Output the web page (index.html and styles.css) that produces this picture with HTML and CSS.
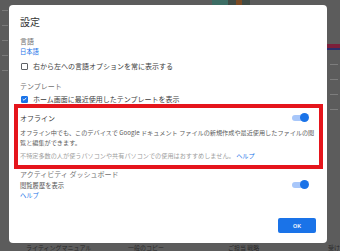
FILE: index.html
```html
<!DOCTYPE html>
<html lang="ja">
<head>
<meta charset="utf-8">
<link rel="stylesheet" href="styles.css">
</head>
<body>
<div class="page">
  <div class="page-top">
    <div class="thumb"><span class="t1"></span><span class="t2"></span></div>
  </div>
  <div class="page-side-left">
    <span class="dash"></span><span class="dash"></span><span class="dash"></span><span class="dash"></span><span class="dash"></span>
  </div>
  <div class="page-side-right">
    <span class="stripe"></span>
    <span class="tiny"></span><span class="tiny"></span><span class="tiny"></span><span class="tiny"></span>
  </div>
  <div class="page-bottom">
    <span class="bt b1">ライティングマニュアル</span>
    <span class="bt b2">一般のコピー</span>
    <span class="bt b3">ご担当 戦略</span>
    <span class="bt b4">受け</span>
  </div>
</div>

<div class="dialog">
  <h1 class="title">設定</h1>

  <div class="label mt-title">言語</div>
  <a class="link lang">日本語</a>
  <div class="check-row mt-row1">
    <span class="box"></span>
    <span class="check-text">右から左への言語オプションを常に表示する</span>
  </div>

  <div class="label mt-sec">テンプレート</div>
  <div class="check-row mt-row2">
    <span class="box checked"><svg viewBox="0 0 10 10" width="6" height="6"><path d="M1.5 5.2 L4 7.6 L8.6 2.6" fill="none" stroke="#fff" stroke-width="1.8"/></svg></span>
    <span class="check-text">ホーム画面に最近使用したテンプレートを表示</span>
  </div>

  <div class="offline">
    <div class="toggle-row">
      <span class="sec-dark">オフライン</span>
      <span class="toggle"><span class="knob"></span></span>
    </div>
    <p class="desc">オフライン中でも、このデバイスで Google ドキュメント ファイルの新規作成や最近使用したファイルの閲覧と編集ができます。</p>
    <p class="note">不特定多数の人が使うパソコンや共有パソコンでの使用はおすすめしません。 <a class="link">ヘルプ</a></p>
  </div>

  <div class="label mt-act">アクティビティ ダッシュボード</div>
  <div class="toggle-row small-row">
    <span class="small-text">閲覧履歴を表示</span>
    <span class="toggle"><span class="knob"></span></span>
  </div>
  <a class="link help2">ヘルプ</a>

  <div class="actions">
    <button class="ok">OK</button>
  </div>
</div>
</body>
</html>
```
FILE: styles.css
```css
* { box-sizing: border-box; margin: 0; padding: 0; }
html, body { width: 340px; height: 251px; overflow: hidden; }
body {
  background: #5c5c5c;
  font-family: "Noto Sans CJK JP", "Roboto", sans-serif;
  position: relative;
}

/* dim background page */
.page { position: relative; width: 340px; height: 251px; }
.page-top { height: 5px; display: flex; padding-left: 212px; }
.thumb { width: 38px; height: 5px; display: flex; background: #3f4a44; }
.t1 { width: 16px; background: #3c6d64; }
.t2 { width: 6px; background: #7a4a24; margin-left: 8px; }
.page-side-left {
  position: absolute; left: 0; top: 10px; width: 9px;
  display: flex; flex-direction: column; gap: 14px; padding-left: 2px;
}
.dash { display: block; width: 6px; height: 1px; background: #7a7a7a; }
.page-side-right {
  position: absolute; left: 327px; top: 44px; width: 13px;
  display: flex; flex-direction: column; gap: 14px;
}
.stripe { display: block; height: 6px; background: #7c1f3a; border-bottom: 2px solid #2a2f6a; }
.tiny { display: block; width: 8px; height: 1px; margin-left: 3px; background: #7d7d7d; }
.page-bottom {
  position: absolute; left: 0; top: 244px; width: 340px; height: 7px;
  font-size: 6px; line-height: 7px; color: #2a2a2a;
}
.bt { position: absolute; top: 0; white-space: nowrap; }
.b1 { left: 26px; }
.b2 { left: 128px; }
.b3 { left: 228px; }
.b4 { left: 328px; }

/* dialog */
.dialog {
  position: absolute; left: 9px; top: 5px;
  width: 318px; height: 238px;
  background: #fff;
  border-radius: 4px;
  padding: 10px 11px 10px 11px;
  display: flex; flex-direction: column;
}
.title { font-size: 10px; line-height: 14px; font-weight: 400; color: #333; }
.label { font-size: 7px; line-height: 10px; color: #707070; }
.mt-title { margin-top: 7px; }
.mt-sec { margin-top: 10px; }
.mt-act { margin-top: 8px; }
.link { color: #1a73e8; font-size: 6.3px; line-height: 10px; text-decoration: none; display: block; }
.lang { margin-top: 1px; }
.check-row { display: flex; align-items: center; height: 10px; }
.mt-row1 { margin-top: 4px; }
.mt-row2 { margin-top: 3px; }
.box {
  width: 7px; height: 7px; border: 1px solid #5f6368; border-radius: 1px;
  margin-left: 1px; margin-right: 5px; flex: none;
  display: flex; align-items: center; justify-content: center;
}
.box.checked { background: #1a73e8; border-color: #1a73e8; }
.box svg { display: block; }
.check-text { font-size: 7px; color: #3c3c3c; white-space: nowrap; }

.offline { position: relative; margin-top: 9px; }
.offline::after {
  content: ""; position: absolute;
  left: -6px; right: -7px; top: -9px; bottom: -8px;
  border: 4px solid #e5151c;
  pointer-events: none;
}
.toggle-row { display: flex; align-items: center; justify-content: space-between; height: 10px; }
.sec-dark { font-size: 7px; color: #3a3a3a; }
.toggle {
  position: relative; width: 16px; height: 6px; border-radius: 3px;
  background: #a8c7fa; margin-right: 8px; margin-top: -1px;
}
.knob {
  position: absolute; right: -1px; top: -2px;
  width: 9px; height: 9px; border-radius: 50%; background: #1a73e8;
}
.desc { margin-top: 5px; font-size: 6.15px; line-height: 10px; color: #5a5a5a; padding-right: 1px; }
.note { margin-top: 3px; font-size: 6.15px; line-height: 10px; color: #a0a0a0; }
.note .link { display: inline; font-size: 6.15px; }

.small-row { margin-top: 1px; }
.small-text { font-size: 6.3px; color: #555; }
.help2 { margin-top: 1px; }

.actions { margin-top: auto; display: flex; justify-content: flex-end; }
.ok {
  width: 38px; height: 15px; border: none; border-radius: 2px;
  background: #1a73e8; color: #fff; font-family: "Roboto", sans-serif;
  font-size: 6px; font-weight: 500;
}
```
